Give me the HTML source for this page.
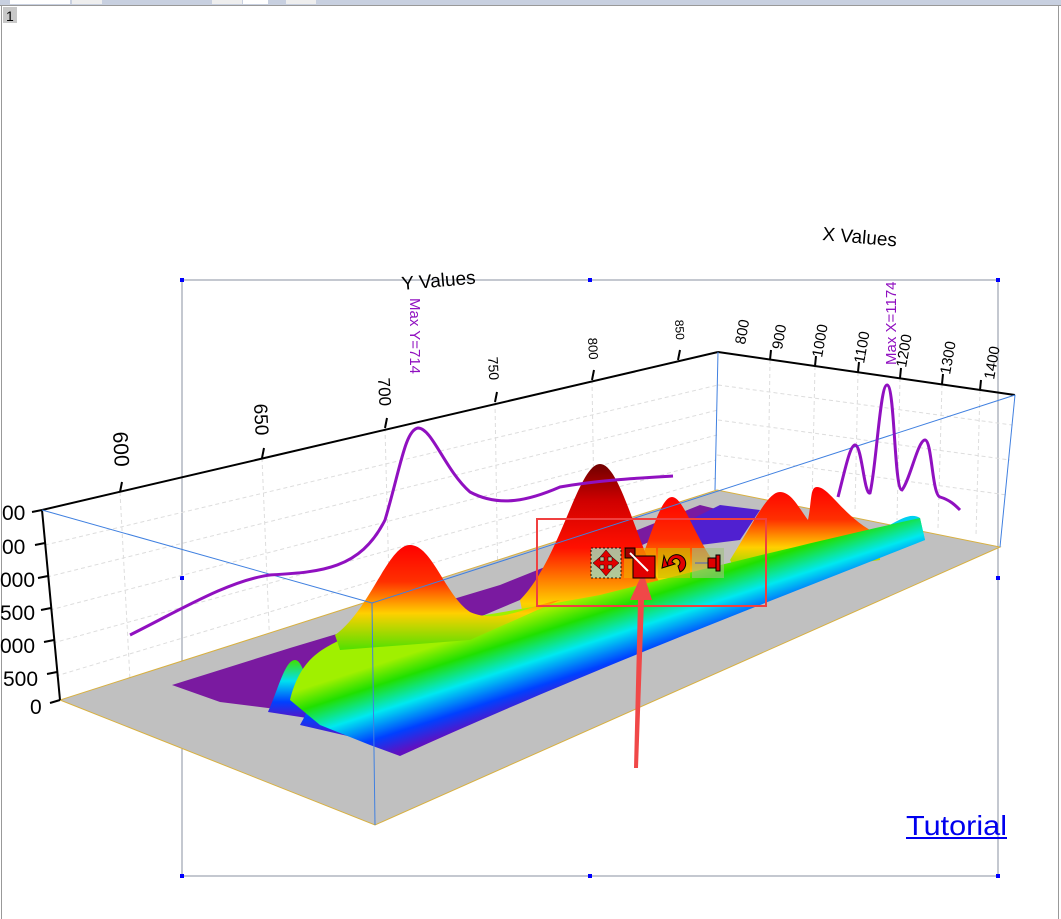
<!DOCTYPE html>
<html><head><meta charset="utf-8"><style>
html,body{margin:0;padding:0;width:1061px;height:919px;overflow:hidden;background:#fff;font-family:"Liberation Sans",sans-serif}
</style></head><body>
<svg width="1061" height="919" viewBox="0 0 1061 919" xmlns="http://www.w3.org/2000/svg" style="position:absolute;left:0;top:0">
<defs>
<linearGradient id="rb" x1="0" y1="0" x2="0" y2="1">
<stop offset="0" stop-color="#ff0000"/><stop offset="0.35" stop-color="#ff3000"/><stop offset="0.65" stop-color="#ffd000"/><stop offset="1" stop-color="#50e000"/>
</linearGradient>
<linearGradient id="rbd" x1="0" y1="0" x2="0" y2="1">
<stop offset="0" stop-color="#700000"/><stop offset="0.2" stop-color="#d00000"/><stop offset="0.45" stop-color="#ff1000"/><stop offset="0.75" stop-color="#ffd000"/><stop offset="1" stop-color="#50e000"/>
</linearGradient>
<linearGradient id="band" gradientUnits="userSpaceOnUse" x1="600" y1="592" x2="628" y2="678">
<stop offset="0" stop-color="#a0f000"/><stop offset="0.22" stop-color="#20e000"/><stop offset="0.5" stop-color="#00e8f0"/><stop offset="0.78" stop-color="#0040ff"/><stop offset="1" stop-color="#6010c0"/>
</linearGradient>
<linearGradient id="rip" x1="0" y1="0" x2="0" y2="1">
<stop offset="0" stop-color="#40e000"/><stop offset="0.35" stop-color="#00e0f0"/><stop offset="0.7" stop-color="#0040ff"/><stop offset="1" stop-color="#6010c0"/>
</linearGradient>
</defs>
<rect x="0" y="0" width="1061" height="5" fill="#c8d0e0"/>
<rect x="10" y="0" width="60" height="4" fill="#fff"/>
<rect x="72" y="0" width="30" height="4" fill="#eee"/>
<rect x="212" y="0" width="30" height="4" fill="#eee"/>
<rect x="243" y="0" width="25" height="4" fill="#fff"/>
<rect x="286" y="0" width="30" height="4" fill="#eee"/>
<rect x="0" y="5" width="1061" height="1" fill="#999"/>
<rect x="1" y="5" width="1" height="914" fill="#999"/>
<rect x="1058" y="5" width="1" height="914" fill="#999"/>
<rect x="3" y="7" width="14" height="16" fill="#c8c8c8"/>
<text x="6" y="21" font-size="14" fill="#000">1</text>
<rect x="182" y="280" width="816" height="596" fill="none" stroke="#8890a0" stroke-width="1"/>
<g fill="#0000ff">
<rect x="180" y="278" width="4" height="4"/><rect x="588" y="278" width="4" height="4"/><rect x="996" y="278" width="4" height="4"/>
<rect x="180" y="576" width="4" height="4"/><rect x="996" y="576" width="4" height="4"/>
<rect x="180" y="874" width="4" height="4"/><rect x="588" y="874" width="4" height="4"/><rect x="996" y="874" width="4" height="4"/>
</g>
<g stroke="#ddd" stroke-width="1" stroke-dasharray="4,3" fill="none">
<line x1="45" y1="545" x2="718" y2="385"/><line x1="47" y1="577" x2="718" y2="410"/><line x1="50" y1="610" x2="717" y2="435"/><line x1="53" y1="643" x2="716" y2="460"/><line x1="56" y1="676" x2="716" y2="478"/>
<line x1="120" y1="492" x2="130" y2="680"/><line x1="262" y1="458" x2="270" y2="650"/><line x1="385" y1="428" x2="390" y2="620"/><line x1="495" y1="402" x2="498" y2="590"/><line x1="592" y1="380" x2="595" y2="565"/>
<line x1="718" y1="385" x2="1012" y2="425"/><line x1="718" y1="420" x2="1010" y2="460"/><line x1="717" y1="455" x2="1007" y2="495"/>
<line x1="770" y1="360" x2="768" y2="498"/><line x1="815" y1="366" x2="812" y2="505"/><line x1="858" y1="372" x2="855" y2="512"/><line x1="900" y1="378" x2="897" y2="520"/><line x1="942" y1="384" x2="938" y2="528"/><line x1="980" y1="390" x2="976" y2="535"/>
</g>
<polygon points="60,700 375,825 1000,547 717,490" fill="#c0c0c0" stroke="#d8b040" stroke-width="1"/>
<polygon points="172,685 290,648 500,585 700,505 720,510 520,600 330,680 300,712 220,702" fill="#7a1aa0"/>
<polygon points="690,520 720,505 760,510 740,540 700,545" fill="#5020d0"/>
<path d="M730,560 C755,520 768,492 780,492 C792,492 800,510 808,520 C812,500 810,487 817,487 C830,487 845,520 880,535 L880,560 L740,580 Z" fill="url(#rb)"/>
<path d="M630,590 C650,540 660,497 672,497 C684,497 695,540 720,570 L720,610 L640,620 Z" fill="url(#rb)"/>
<path d="M520,600 C560,560 578,464 600,464 C622,464 640,560 665,590 L640,640 L530,650 Z" fill="url(#rbd)"/>
<path d="M880,530 C900,520 910,512 920,518 L925,540 L880,555 Z" fill="#00d0f0"/>
<!-- left ripples -->
<path d="M268,712 C278,690 285,660 295,660 C305,660 310,700 320,720 Z" fill="url(#rip)"/>
<path d="M300,725 C315,700 322,665 335,665 C348,665 352,710 365,740 Z" fill="url(#rip)"/>
<path d="M290,700 C300,660 320,650 340,640 C420,625 520,610 600,595 C700,570 820,540 920,518 L925,540 C800,590 600,665 400,756 L370,745 L320,725 Z" fill="url(#band)"/>
<path d="M335,635 C370,610 388,545 410,545 C432,545 445,595 470,612 C500,625 530,605 560,600 L470,640 L340,650 Z" fill="url(#rb)"/>
<g stroke="#000" stroke-width="2" fill="none">
<line x1="42" y1="510" x2="718" y2="352"/>
<line x1="42" y1="510" x2="60" y2="700"/>
<line x1="718" y1="352" x2="1015" y2="395"/>
</g>
<g stroke="#000" stroke-width="2">
<line x1="32" y1="512" x2="42" y2="510"/><line x1="35" y1="545" x2="45" y2="543"/><line x1="38" y1="578" x2="48" y2="576"/><line x1="41" y1="610" x2="51" y2="608"/><line x1="44" y1="642" x2="54" y2="640"/><line x1="47" y1="674" x2="57" y2="672"/><line x1="50" y1="703" x2="60" y2="700"/>
<line x1="120" y1="492" x2="122" y2="482"/><line x1="262" y1="458" x2="264" y2="448"/><line x1="385" y1="428" x2="387" y2="418"/><line x1="495" y1="402" x2="497" y2="392"/><line x1="592" y1="380" x2="594" y2="370"/><line x1="678" y1="360" x2="680" y2="350"/>
<line x1="770" y1="360" x2="771" y2="350"/><line x1="815" y1="366" x2="816" y2="356"/><line x1="858" y1="372" x2="859" y2="362"/><line x1="900" y1="378" x2="901" y2="368"/><line x1="942" y1="384" x2="943" y2="374"/><line x1="980" y1="390" x2="981" y2="380"/>
</g>
<g stroke="#4080e0" stroke-width="1" fill="none">
<line x1="42" y1="510" x2="372" y2="603"/><line x1="372" y1="603" x2="1015" y2="395"/>
<line x1="372" y1="603" x2="375" y2="825"/><line x1="718" y1="352" x2="715" y2="490"/><line x1="1015" y1="395" x2="1000" y2="547"/>
</g>
<g font-size="21" fill="#000">
<text x="2" y="520">00</text><text x="2" y="554">00</text><text x="0" y="587">000</text><text x="0" y="620">500</text><text x="0" y="653">000</text><text x="3" y="686">500</text><text x="30" y="714">0</text>
</g>
<g fill="#000">
<text transform="translate(113,432) rotate(87)" font-size="21">600</text>
<text transform="translate(254,404) rotate(87)" font-size="19">650</text>
<text transform="translate(378,378) rotate(87)" font-size="17">700</text>
<text transform="translate(488,357) rotate(87)" font-size="14">750</text>
<text transform="translate(588,338) rotate(87)" font-size="13">800</text>
<text transform="translate(675,320) rotate(87)" font-size="12">850</text>
<text transform="translate(402,290) rotate(-5)" font-size="19">Y Values</text>
<text transform="translate(822,240) rotate(5)" font-size="19">X Values</text>
</g>
<g font-size="15" fill="#000">
<text transform="translate(745,345) rotate(-80)">800</text>
<text transform="translate(782,350) rotate(-80)">900</text>
<text transform="translate(822,358) rotate(-80)">1000</text>
<text transform="translate(864,364) rotate(-80)">1100</text>
<text transform="translate(906,368) rotate(-80)">1200</text>
<text transform="translate(950,375) rotate(-80)">1300</text>
<text transform="translate(994,380) rotate(-80)">1400</text>
</g>
<g font-size="15" fill="#9010c0">
<text transform="translate(410,298) rotate(90)">Max Y=714</text>
<text transform="translate(896,365) rotate(-90)">Max X=1174</text>
</g>
<path d="M130,635 C180,610 230,580 270,575 C320,572 360,570 385,520 C400,470 405,430 418,428 C432,428 445,470 470,492 C500,508 530,500 560,487 C600,480 640,478 673,476" fill="none" stroke="#9010c0" stroke-width="3"/>
<path d="M838,497 C845,470 850,445 855,445 C862,445 864,495 870,493 C876,470 880,385 887,385 C895,385 894,490 902,490 C910,480 918,440 925,440 C932,440 932,495 940,497 C950,500 955,505 960,510" fill="none" stroke="#9010c0" stroke-width="3"/>
<rect x="537" y="519" width="229" height="87" fill="none" stroke="#f04040" stroke-width="2"/>
<polygon points="634,768 638,600 630,600 643,572 652,600 644,600 638,768" fill="#f04848"/>
<rect x="591" y="548" width="30" height="30" fill="#a0e0c0" opacity="0.8" stroke="#000" stroke-dasharray="2,2"/>
<path d="M606,550 L612,557 L608,557 L608,561 L612,561 L612,557 L619,563 L612,569 L612,565 L608,565 L608,569 L612,569 L606,576 L600,569 L604,569 L604,565 L600,565 L600,569 L593,563 L600,557 L600,561 L604,561 L604,557 L600,557 Z" fill="#e00000" stroke="#000" stroke-width="0.5"/>
<rect x="624" y="548" width="32" height="30" fill="#f0b000" opacity="0.6"/>
<rect x="625" y="548" width="10" height="10" fill="#a00000" stroke="#000"/>
<rect x="633" y="556" width="22" height="22" fill="#e00000" stroke="#000"/>
<line x1="630" y1="553" x2="648" y2="571" stroke="#fff" stroke-width="2"/>
<rect x="658" y="548" width="32" height="30" fill="#c8c000" opacity="0.6"/>
<path d="M668,566 A9,9 0 1,1 680,572 L678,566 A4,4 0 1,0 672,562 L675,564 L662,568 L664,556 Z" fill="#e00000" stroke="#000"/>
<rect x="692" y="548" width="32" height="30" fill="#a0c080" opacity="0.6"/>
<line x1="695" y1="563" x2="708" y2="563" stroke="#888" stroke-width="2"/>
<rect x="708" y="558" width="8" height="10" fill="#e00000" stroke="#000"/>
<rect x="716" y="555" width="4" height="16" fill="#e00000" stroke="#000"/>
<text x="906" y="835" font-size="28" fill="#0000ee" textLength="101" lengthAdjust="spacingAndGlyphs">Tutorial</text>
<line x1="906" y1="838" x2="1007" y2="838" stroke="#0000ee" stroke-width="2"/>
</svg>
</body></html>
